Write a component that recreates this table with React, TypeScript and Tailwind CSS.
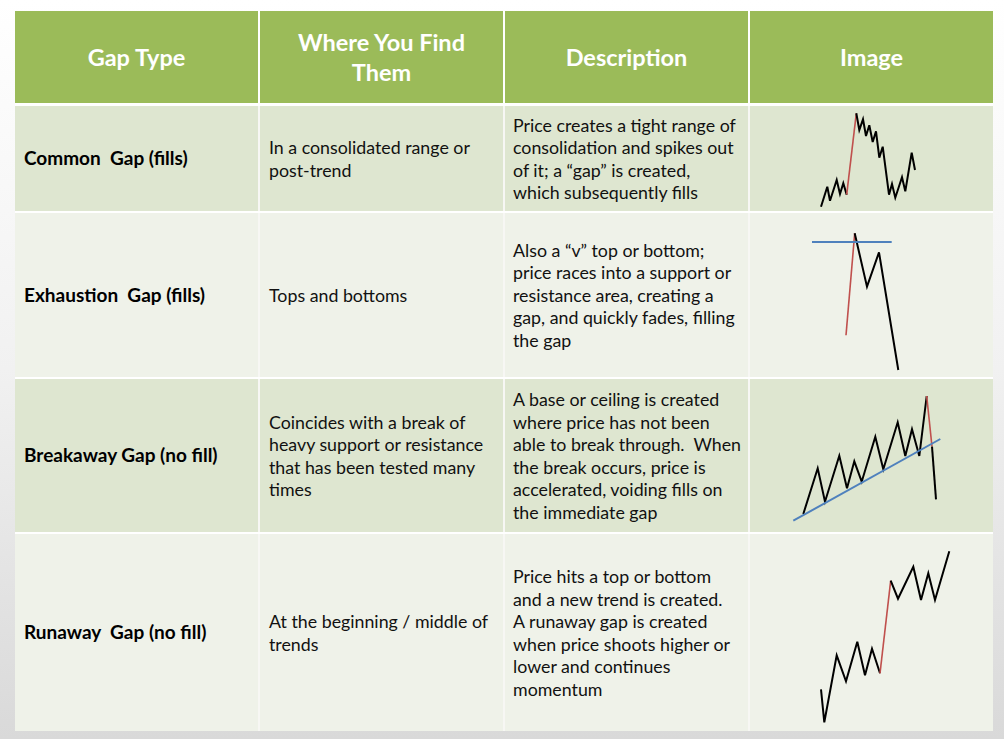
import React from "react";

type Pt = [number, number];

const line = (pts: Pt[]) => pts.map(p => `${p[0]},${p[1]}`).join(" ");

const BLACK = "#000000";
const RED = "#c0504d";
const BLUE = "#4f81bd";

function CommonChart() {
  return (
    <svg className="h-full w-full" viewBox="750 106 243 105">
      <polyline
        fill="none"
        stroke={BLACK}
        strokeWidth={2}
        points={line([
          [821, 206.7], [827.3, 186.7], [830, 200.7], [836.7, 180], [840, 194],
          [843.3, 183.3], [846.7, 194.7],
        ])}
      />
      <polyline fill="none" stroke={RED} strokeWidth={1.6} points={line([[846.7, 194.7], [856.3, 113.3]])} />
      <polyline
        fill="none"
        stroke={BLACK}
        strokeWidth={2}
        points={line([
          [856.3, 113.3], [859.3, 130], [863, 119.3], [866, 136], [869.3, 125.3], [872.7, 142],
          [876, 131.3], [879.3, 157.7], [882.7, 146.7], [889, 194.7], [892, 184], [895.3, 197.7],
          [902, 177.3], [905.3, 191.3], [911.7, 152.7], [915, 170],
        ])}
      />
    </svg>
  );
}

function ExhaustionChart() {
  return (
    <svg className="h-full w-full" viewBox="750 213 243 164">
      <polyline fill="none" stroke={RED} strokeWidth={1.6} points={line([[846, 335.3], [854.7, 233.3]])} />
      <polyline
        fill="none"
        stroke={BLACK}
        strokeWidth={2}
        points={line([[854.7, 233.3], [867, 286.7], [879, 252.3], [898.3, 370]])}
      />
      <polyline fill="none" stroke={BLUE} strokeWidth={2} points={line([[812, 242], [891.7, 242]])} />
    </svg>
  );
}

function BreakawayChart() {
  return (
    <svg className="h-full w-full" viewBox="750 379 243 153">
      <polyline
        fill="none"
        stroke={BLACK}
        strokeWidth={2}
        points={line([
          [803.3, 514], [817.7, 468.3], [825, 501.7], [839.3, 455.7], [847, 488.3], [854.3, 461.3],
          [861.7, 481.7], [875.3, 436.7], [883.3, 469.3], [897.7, 422.3], [905.3, 456], [912, 429.3],
          [919.3, 456], [926.7, 396],
        ])}
      />
      <polyline fill="none" stroke={RED} strokeWidth={1.6} points={line([[926.7, 396], [932, 446.7]])} />
      <polyline fill="none" stroke={BLACK} strokeWidth={2} points={line([[932, 446.7], [936, 499.3]])} />
      <polyline fill="none" stroke={BLUE} strokeWidth={2} points={line([[793.3, 520.7], [940.3, 439]])} />
    </svg>
  );
}

function RunawayChart() {
  return (
    <svg className="h-full w-full" viewBox="750 534 243 197">
      <polyline
        fill="none"
        stroke={BLACK}
        strokeWidth={2}
        points={line([
          [821, 689.3], [824.3, 722.3], [836.7, 655.3], [846, 681.3], [857.3, 641.7], [865, 675.3],
          [872, 648.7], [880, 673.3],
        ])}
      />
      <polyline fill="none" stroke={RED} strokeWidth={1.6} points={line([[880, 673.3], [890.7, 580.7]])} />
      <polyline
        fill="none"
        stroke={BLACK}
        strokeWidth={2}
        points={line([
          [890.7, 580.7], [898, 598.7], [913.3, 566.7], [921, 600], [928.3, 573.3], [935, 600],
          [949.3, 551.3],
        ])}
      />
    </svg>
  );
}

type Row = {
  name: string;
  where: string[];
  desc: string[];
  chart: React.ReactNode;
  height: string;
  bg: string;
};

const rows: Row[] = [
  {
    name: "Common  Gap (fills)",
    where: ["In a consolidated range or", "post-trend"],
    desc: [
      "Price creates a tight range of",
      "consolidation and spikes out",
      "of it; a \u201cgap\u201d is created,",
      "which subsequently fills",
    ],
    chart: <CommonChart />,
    height: "h-[105px]",
    bg: "bg-[#dee6d0]",
  },
  {
    name: "Exhaustion  Gap (fills)",
    where: ["Tops and bottoms"],
    desc: [
      "Also a \u201cv\u201d top or bottom;",
      "price races into a support or",
      "resistance area, creating a",
      "gap, and quickly fades, filling",
      "the gap",
    ],
    chart: <ExhaustionChart />,
    height: "h-[164px]",
    bg: "bg-[#eff2e9]",
  },
  {
    name: "Breakaway Gap (no fill)",
    where: [
      "Coincides with a break of",
      "heavy support or resistance",
      "that has been tested many",
      "times",
    ],
    desc: [
      "A base or ceiling is created",
      "where price has not been",
      "able to break through.  When",
      "the break occurs, price is",
      "accelerated, voiding fills on",
      "the immediate gap",
    ],
    chart: <BreakawayChart />,
    height: "h-[153px]",
    bg: "bg-[#dee6d0]",
  },
  {
    name: "Runaway  Gap (no fill)",
    where: ["At the beginning / middle of", "trends"],
    desc: [
      "Price hits a top or bottom",
      "and a new trend is created.",
      "A runaway gap is created",
      "when price shoots higher or",
      "lower and continues",
      "momentum",
    ],
    chart: <RunawayChart />,
    height: "h-[197px]",
    bg: "bg-[#eff2e9]",
  },
];

function Lines({ lines }: { lines: string[] }) {
  return (
    <div className="flex flex-col">
      {lines.map(l => (
        <span key={l} className="whitespace-pre">
          {l}
        </span>
      ))}
    </div>
  );
}

export default function App() {
  return (
    <div
      className="h-[739px] w-[1004px] overflow-hidden bg-gradient-to-b from-white via-[#f1f1f1] to-[#d9d9d9] pl-[15px] pt-[11px]"
      style={{ fontFamily: "Lato, 'Open Sans', sans-serif" }}
    >
      <div className="flex w-[978px] flex-col bg-white">
        {/* Header */}
        <div className="mb-[3px] grid h-[92px] grid-cols-4 gap-x-[2px] bg-white/90 text-[23.5px] font-bold leading-[30px] text-white">
          <div className="flex items-center justify-center bg-[#9bbb59]">Gap Type</div>
          <div className="flex flex-col items-center justify-center bg-[#9bbb59] text-center">
            <span>Where You Find</span>
            <span>Them</span>
          </div>
          <div className="flex items-center justify-center bg-[#9bbb59]">Description</div>
          <div className="flex items-center justify-center bg-[#9bbb59]">Image</div>
        </div>

        {/* Rows */}
        {rows.map((r, i) => (
          <div
            key={r.name}
            className={`grid grid-cols-4 gap-x-[2px] bg-[#f7f7f4] ${r.height} ${i > 0 ? "mt-[2px]" : ""}`}
          >
            <div className={`flex items-center pl-[9px] text-[19px] font-bold text-black whitespace-pre ${r.bg}`}>
              {r.name}
            </div>
            <div className={`flex items-center pl-[9px] text-[17.8px] leading-[22.5px] text-[#111] ${r.bg}`}>
              <Lines lines={r.where} />
            </div>
            <div className={`flex items-center pl-[8px] text-[17.8px] leading-[22.5px] text-[#111] ${r.bg}`}>
              <Lines lines={r.desc} />
            </div>
            <div className={r.bg}>{r.chart}</div>
          </div>
        ))}
      </div>
    </div>
  );
}
